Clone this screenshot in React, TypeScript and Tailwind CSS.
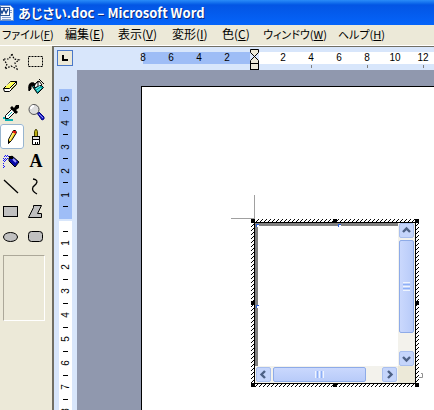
import type { ReactNode } from "react";

const menus = [
  { label: "ファイル", hotkey: "F", style: "w-[63px] text-[11px]" },
  { label: "編集", hotkey: "E", style: "w-[53px] text-[12px]" },
  { label: "表示", hotkey: "V", style: "w-[54px] text-[12px]" },
  { label: "変形", hotkey: "I", style: "w-[50px] text-[12px]" },
  { label: "色", hotkey: "C", style: "w-[41px] text-[12px]" },
  { label: "ウィンドウ", hotkey: "W", style: "w-[75px] text-[11px]" },
  { label: "ヘルプ", hotkey: "H", style: "w-[60px] text-[11px]" },
];

const tools: { name: string; icon: ReactNode }[] = [
  {
    name: "自由選択",
    icon: (
      <path
        d="M12 5L14 10L19 11L15 14L17 20L11 17L5 20L7 15L3 10L9 10Z"
        fill="none"
        stroke="#000"
        strokeWidth="1.2"
        strokeDasharray="1.6 1.4"
      />
    ),
  },
  {
    name: "選択",
    icon: <rect x="4.5" y="7.5" width="14" height="10" fill="none" stroke="#000" strokeDasharray="2 1" />,
  },
  {
    name: "消しゴム",
    icon: (
      <g stroke="#000">
        <path d="M3.5 14.5L10.5 7.5H16.5L16.5 10.5L9.5 17.5H4.5Z" fill="#fff" />
        <path d="M3.5 14.5L10.5 7.5H16.5L9.5 14.5Z" fill="#ff5" />
        <path d="M6 12L11 8" stroke="#fffbc0" />
        <path d="M11 15L16 10" stroke="#a9a62b" />
      </g>
    ),
  },
  {
    name: "塗りつぶし",
    icon: (
      <g stroke="#000">
        <path d="M8.5 12.5L13.5 7.5L19.5 13.5L13.5 19.5Z" fill="#08a0a0" />
        <path d="M11 10L15 7L18 11L10 14Z" fill="#fff" />
        <path d="M14 7V12M15 5L20 10" />
        <path d="M10 9C6 8 4 10 5 17L7 15V12L11 11Z" fill="#000" />
        <path d="M12 15L16 12M13 17L17 14" stroke="#8ff" />
      </g>
    ),
  },
  {
    name: "色の選択",
    icon: (
      <g>
        <path d="M3 18H8V20H13V22H5V20H3Z" fill="#08b0b0" />
        <path d="M5.5 19.5V16.5L12.5 9.5L15.5 12.5L8.5 19.5Z" fill="#fff" stroke="#000" />
        <path d="M8 17L12 13" stroke="#08b0b0" />
        <path d="M10 9L12 7L14 9L16 6H19V9L16 11L18 13L16 15Z" fill="#000" />
      </g>
    ),
  },
  {
    name: "拡大と縮小",
    icon: (
      <g>
        <path d="M13 14L15 13L20 18V20L18 21Z" fill="#22b" stroke="#008" />
        <path d="M15 15L19 19" stroke="#88f" />
        <circle cx="10" cy="10.5" r="5" fill="#ddd" stroke="#555" />
        <path d="M7 10Q7 7 10 7" fill="none" stroke="#fff" strokeWidth="2" />
      </g>
    ),
  },
  {
    name: "鉛筆",
    icon: (
      <g>
        <path d="M8.5 19.5V15.5L13.5 6.5H15.5L16.5 8.5L11.5 16.5Z" fill="#fd3" stroke="#000" />
        <path d="M13 7H16V10L12 8Z" fill="#e01010" />
        <path d="M10 15L13 9" stroke="#fff7a0" />
        <path d="M8 17H10L8 20Z" fill="#000" />
      </g>
    ),
  },
  {
    name: "ブラシ",
    icon: (
      <g>
        <path d="M10.5 12.5V7.5L11.5 5.5H12.5L13.5 7.5V12.5Z" fill="#b9ac12" stroke="#443f00" />
        <rect x="8.5" y="12.5" width="7" height="3" fill="#ddd" stroke="#000" />
        <path d="M8.5 15.5H15.5V20.5H8.5Z" fill="#fff" stroke="#000" />
        <path d="M11.5 18V20M13.5 18V20" stroke="#000" />
      </g>
    ),
  },
  {
    name: "エアブラシ",
    icon: (
      <g>
        <path d="M9 9L12 7L19 13L15 18L9 12Z" fill="#0808a8" stroke="#000" />
        <path d="M9 7H13V10H9Z" fill="#000" />
        <path d="M13 10L16 13" stroke="#99f" strokeWidth="2" />
        <path
          d="M4 7.5H9M5 6.5H9M3 9.5H8M4 10.5H7M3 11.5H6M4 12.5H6M3 14.5H5M3 16.5H4M4 17.5H5M3 18.5H4"
          stroke="#11f"
          strokeDasharray="1 1"
          shapeRendering="crispEdges"
        />
      </g>
    ),
  },
  { name: "テキスト", icon: null },
  { name: "直線", icon: <path d="M4 6L18 19" stroke="#000" strokeWidth="1.3" fill="none" /> },
  { name: "曲線", icon: <path d="M9 5Q15 6 12 10L9 13Q7 17 13 20" stroke="#000" strokeWidth="1.3" fill="none" /> },
  { name: "四角形", icon: <rect x="3.5" y="7.5" width="14" height="10" fill="#c0c0c0" stroke="#000" /> },
  { name: "多角形", icon: <path d="M9.5 6.5H17.5L13.5 14.5H17.5V18.5H4.5L9.5 8.5Z" fill="#c0c0c0" stroke="#000" /> },
  { name: "楕円", icon: <ellipse cx="10.5" cy="13" rx="7" ry="4.5" fill="#c0c0c0" stroke="#000" /> },
  { name: "角丸四角形", icon: <rect x="4.5" y="7.5" width="14" height="10" rx="3" fill="#c0c0c0" stroke="#000" /> },
];

function TitleBar() {
  return (
    <header className="flex h-[25px] shrink-0 items-center gap-1 bg-linear-to-b from-[#2a8cf8] via-[#0355e4] via-20% to-[#0564fa]">
      <svg className="h-[17px] w-[14px]" viewBox="0 0 14 17" shapeRendering="crispEdges" aria-hidden="true">
        <path d="M0 1H10L13 4V16H0Z" fill="#f4f8ff" stroke="#6f93c8" />
        <path d="M10 6H12M10 8H12M2 13H11M2 15H11" stroke="#7d9dd0" />
        <path d="M0 3H9V11H0Z" fill="#fff" stroke="#2a5699" />
        <path d="M0 5L2 9L4 5L6 9L8 5" fill="none" stroke="#1c4a94" strokeWidth="1.5" shapeRendering="auto" />
      </svg>
      <h1 className="text-[13px] leading-5 font-bold whitespace-nowrap text-white [font-feature-settings:'palt'] [text-shadow:1px_1px_0_#0a2a80]">
        あじさい.doc – Microsoft Word
      </h1>
    </header>
  );
}

function MenuBar() {
  return (
    <nav className="flex h-[21px] shrink-0 items-start border-b border-white bg-[#ece9d8] pl-[2px]">
      {menus.map((m) => (
        <button
          key={m.label}
          className={`${m.style} shrink-0 text-left leading-[18px] whitespace-nowrap [font-feature-settings:'palt']`}
        >
          {m.label}(<span className="underline underline-offset-1">{m.hotkey}</span>)
        </button>
      ))}
    </nav>
  );
}

function ToolBox() {
  return (
    <aside className="w-[52px] shrink-0 bg-[#ece9d8] pt-[3px]">
      <div className="grid w-12 grid-cols-2">
        {tools.map((t) => (
          <button
            key={t.name}
            aria-label={t.name}
            className={`h-[25px] w-6 ${t.name === "鉛筆" ? "rounded-[3px] bg-white outline outline-[#98b5cf] -outline-offset-1" : ""}`}
          >
            {t.icon ? (
              <svg className="block h-[25px] w-6" viewBox="0 0 24 25">
                {t.icon}
              </svg>
            ) : (
              <span className="block font-['Liberation_Serif',serif] text-[18px] leading-[25px] font-bold">A</span>
            )}
          </button>
        ))}
      </div>
      <div className="mt-[6px] ml-[3px] h-[66px] w-[42px] border border-t-[#aca899] border-r-white border-b-white border-l-[#aca899]" />
    </aside>
  );
}

function HorizontalRuler() {
  return (
    <div className="flex h-[23px] shrink-0 overflow-hidden bg-[#d8e6fb] font-['Liberation_Sans',sans-serif] text-[10px] leading-3">
      <div className="w-[89px] shrink-0 pt-[3px] pl-[3px]">
        <button aria-label="タブ" className="flex size-4 items-center justify-center border border-[#4a78c8] bg-[#ece9d8]">
          <span className="size-[6px] border-b-2 border-l-2 border-black" />
        </button>
      </div>
      <div className="mt-[5px] flex h-3 w-[107px] shrink-0 bg-[#9ebdf6]">
        {[8, 6, 4, 2].map((n) => (
          <span key={n} className="w-7 shrink-0 text-center first:-ml-[14px]">
            {n}
          </span>
        ))}
      </div>
      <svg className="mt-[2px] h-[21px] w-[9px] shrink-0" viewBox="0 0 9 21" aria-hidden="true">
        <path d="M.5 .5H8.5V3.5L.5 11.5V14.5H8.5V11.5L.5 3.5Z" fill="#ece9d8" stroke="#000" />
        <rect x=".5" y="14.5" width="8" height="6" fill="#ece9d8" stroke="#000" />
      </svg>
      <div className="mt-[5px] flex h-3 flex-1 bg-white pl-[10px]">
        {[2, 4, 6, 8, 10, 12].map((n) => (
          <div key={n} className="flex w-7 shrink-0 flex-col items-center">
            <span>{n}</span>
            {n % 4 === 0 && <span className="mt-px h-[3px] w-px shrink-0 bg-[#808080]" />}
          </div>
        ))}
      </div>
    </div>
  );
}

function VerticalRuler() {
  return (
    <div className="flex w-[23px] shrink-0 flex-col overflow-hidden bg-[#d8e6fb] pt-[19px] pl-[5px] font-['Liberation_Sans',sans-serif] text-[10px] leading-3">
      <div className="h-[130px] w-[13px] shrink-0 bg-[#9ebdf6] pt-1">
        {[5, 4, 3, 2, 1].map((n) => (
          <div key={n} className="flex h-6 flex-col items-center">
            <span className="size-3 -rotate-90 text-center">{n}</span>
            <span className="mt-[5px] h-px w-[5px] bg-black" />
          </div>
        ))}
      </div>
      <div className="mt-[2px] w-[13px] flex-1 bg-white pt-[10px]">
        {[1, 2, 3, 4, 5, 6, 7, 8].map((n) => (
          <div key={n} className="flex h-6 flex-col items-center">
            <span className="h-px w-[5px] bg-black" />
            <span className="mt-[5px] size-3 -rotate-90 text-center">{n}</span>
          </div>
        ))}
      </div>
    </div>
  );
}

const arrows = {
  up: "M4 9L7.5 5.5L11 9",
  down: "M4 6L7.5 9.5L11 6",
  left: "M9 4L5.5 7.5L9 11",
  right: "M6 4L9.5 7.5L6 11",
};

function ScrollButton({ dir }: { dir: keyof typeof arrows }) {
  return (
    <button aria-label={dir} className="size-[15px] shrink-0 rounded-[2px] border border-[#a9bfee] bg-[#c5d5fb]">
      <svg className="-m-px block size-[15px]" viewBox="0 0 15 15">
        <path d={arrows[dir]} fill="none" stroke="#4d6185" strokeWidth="2.4" />
      </svg>
    </button>
  );
}

const handles = [
  "top-0 left-0",
  "top-0 left-[82px]",
  "top-0 right-0",
  "top-[82px] left-0",
  "top-[82px] right-0",
  "bottom-0 left-0",
  "bottom-0 left-[82px]",
  "right-0 bottom-0",
];

function EmbeddedObject() {
  return (
    <div className="relative size-[168px] p-[3px]">
      <svg className="absolute inset-0 size-full" shapeRendering="crispEdges" aria-hidden="true">
        <defs>
          <pattern id="hatch" width="4" height="4" patternUnits="userSpaceOnUse">
            <rect width="4" height="4" fill="#fff" />
            <path d="M3 0h1v1h-1zM2 1h1v1h-1zM1 2h1v1h-1zM0 3h1v1h-1z" fill="#000" />
          </pattern>
        </defs>
        <rect width="100%" height="100%" fill="url(#hatch)" />
      </svg>
      <div className="relative grid size-full grid-cols-[1fr_17px] grid-rows-[1fr_17px] border border-black bg-white">
        <div className="border-t-[3px] border-l-[3px] border-[#808080]" />
        <div className="flex flex-col items-center gap-[2px] bg-[#f3f2ec]">
          <ScrollButton dir="up" />
          <div className="flex h-[93px] w-[15px] flex-col items-center justify-center gap-px rounded-[2px] border border-[#8eabe8] bg-linear-to-r from-[#cad8fd] to-[#b8cbf9]">
            <span className="h-px w-[7px] bg-[#eef4fe]" />
            <span className="h-px w-[7px] bg-[#8cb0f8]" />
            <span className="h-px w-[7px] bg-[#eef4fe]" />
            <span className="h-px w-[7px] bg-[#8cb0f8]" />
            <span className="h-px w-[7px] bg-[#eef4fe]" />
          </div>
          <span className="flex-1" />
          <ScrollButton dir="down" />
        </div>
        <div className="flex items-center gap-[2px] bg-[#f3f2ec] px-px">
          <ScrollButton dir="left" />
          <div className="flex h-[15px] w-[93px] items-center justify-center gap-px rounded-[2px] border border-[#8eabe8] bg-linear-to-b from-[#cad8fd] to-[#b8cbf9]">
            <span className="h-[7px] w-px bg-[#eef4fe]" />
            <span className="h-[7px] w-px bg-[#8cb0f8]" />
            <span className="h-[7px] w-px bg-[#eef4fe]" />
            <span className="h-[7px] w-px bg-[#8cb0f8]" />
            <span className="h-[7px] w-px bg-[#eef4fe]" />
          </div>
          <span className="flex-1" />
          <ScrollButton dir="right" />
        </div>
        <div className="bg-[#ece9d8]" />
        <span className="absolute top-px left-px size-[3px] border-t border-l border-[#2a5fd8] bg-white" />
        <span className="absolute top-px left-[83px] size-[3px] border-t border-l border-[#2a5fd8] bg-white" />
        <span className="absolute top-[82px] left-px size-[3px] border-t border-l border-[#2a5fd8] bg-white" />
      </div>
      {handles.map((h) => (
        <span key={h} className={`absolute size-1 bg-black ${h}`} />
      ))}
      <span className="absolute -top-6 left-[3px] h-6 w-px bg-[#a0a0a0]" />
      <span className="absolute -top-px -left-5 h-px w-6 bg-[#a0a0a0]" />
      <svg className="absolute -right-1 bottom-2 h-[6px] w-[4px]" viewBox="0 0 4 6" aria-hidden="true">
        <path d="M2 .5H3.5V4.5H0" fill="none" stroke="#909090" />
      </svg>
    </div>
  );
}

export default function App() {
  return (
    <div className="flex h-screen flex-col overflow-hidden bg-[#ece9d8] font-['Noto_Sans_CJK_JP',sans-serif] text-black">
      <TitleBar />
      <MenuBar />
      <div className="flex min-h-0 flex-1">
        <ToolBox />
        <main className="flex min-w-0 flex-1 flex-col border-t border-l-2 border-[#716f64]">
          <HorizontalRuler />
          <div className="flex min-h-0 flex-1">
            <VerticalRuler />
            <div className="min-w-0 flex-1 overflow-hidden bg-[#9098ae] pt-4 pl-16">
              <section className="h-full border-t border-l border-black bg-white pt-[132px] pl-[109px]">
                <EmbeddedObject />
              </section>
            </div>
          </div>
        </main>
      </div>
    </div>
  );
}
